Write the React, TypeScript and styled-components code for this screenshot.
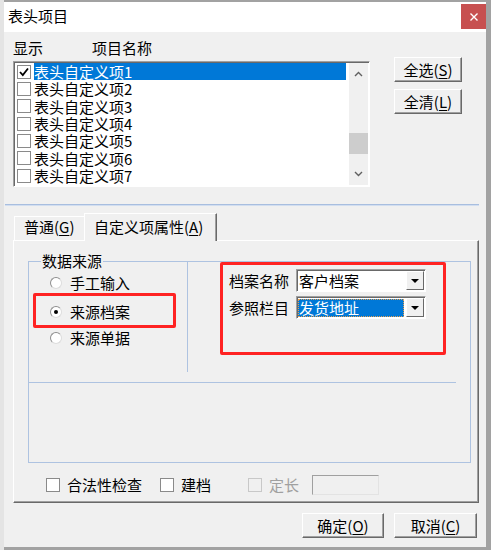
import React from "react";
import styled, { createGlobalStyle } from "styled-components";

const FONT = `"Noto Sans CJK SC", "Noto Sans", sans-serif`;

const GlobalStyle = createGlobalStyle`
  html, body { margin: 0; padding: 0; }
  body {
    width: 491px;
    height: 550px;
    overflow: hidden;
    background: linear-gradient(to right, #e4e4e4 0 4px, #a2a2a2 4px);
    font-family: ${FONT};
    font-size: 15px;
    color: #000;
  }
`;

const Screen = styled.div`
  padding: 2px 0 0 4px;
`;

const Window = styled.div`
  width: 482px;
  height: 545px;
  background: #f0f0f0;
  display: flex;
  flex-direction: column;
`;

const TitleBar = styled.div`
  height: 30px;
  flex-shrink: 0;
  background: #fff;
  display: flex;
  align-items: flex-start;
`;

const Title = styled.div`
  flex: 1;
  padding: 5px 0 0 4px;
  line-height: 18px;
`;

const CloseButton = styled.div`
  width: 25px;
  height: 25px;
  margin-top: 2px;
  background: #c75050;
  display: flex;
  align-items: center;
  justify-content: center;
`;

const Body = styled.div`
  padding: 8px 8px 0 9px;
  display: flex;
  flex-direction: column;
`;

const HeaderRow = styled.div`
  display: flex;
  height: 16px;
  line-height: 16px;
`;

const HeaderCell = styled.div<{ $w?: number }>`
  width: ${(p) => (p.$w ? `${p.$w}px` : "auto")};
`;

const ListRow = styled.div`
  display: flex;
  align-items: flex-start;
  margin-top: 5px;
`;

const ListBox = styled.div`
  width: 357px;
  height: 126px;
  box-sizing: border-box;
  border: 1px solid;
  border-color: #a0a0a0 #ffffff #ffffff #a0a0a0;
  box-shadow: inset 1px 1px 0 #696969;
  background: #fff;
  display: flex;
  padding: 1px 1px 0 1px;
`;

const Rows = styled.div`
  flex: 1;
  padding: 0 3px 0 0;
`;

const Row = styled.div`
  height: 17.33px;
  display: flex;
  align-items: center;
  padding-left: 2px;
`;

const Check = styled.div<{ $disabled?: boolean }>`
  width: 14px;
  height: 14px;
  flex-shrink: 0;
  box-sizing: border-box;
  border: 1px solid ${(p) => (p.$disabled ? "#c8c8c8" : "#8a8a8a")};
  background: ${(p) => (p.$disabled ? "#f0f0f0" : "#fff")};
  display: flex;
  align-items: center;
  justify-content: center;
`;

const RowLabel = styled.div<{ $selected?: boolean }>`
  flex: 1;
  margin-left: 3px;
  height: 17px;
  line-height: 17px;
  white-space: nowrap;
  background: ${(p) => (p.$selected ? "#0078d7" : "transparent")};
  color: ${(p) => (p.$selected ? "#fff" : "#000")};
`;

const ScrollBar = styled.div`
  width: 19px;
  display: flex;
  flex-direction: column;
  background: #f0f0f0;
  margin-bottom: 1px;
`;

const ScrollBtn = styled.div`
  height: 22px;
  display: flex;
  align-items: center;
  justify-content: center;
`;

const Track = styled.div`
  flex: 1;
  padding-top: 48px;
`;

const Thumb = styled.div`
  height: 21px;
  background: #cdcdcd;
`;

const SideButtons = styled.div`
  display: flex;
  flex-direction: column;
  gap: 7px;
  margin: -4px 0 0 24px;
`;

const ClassicButton = styled.div<{ $w: number }>`
  width: ${(p) => p.$w}px;
  height: 25px;
  box-sizing: border-box;
  border: 1px solid;
  border-color: #ffffff #696969 #696969 #ffffff;
  box-shadow: inset -1px -1px 0 #a0a0a0;
  background: #f0f0f0;
  display: flex;
  align-items: center;
  justify-content: center;
  line-height: 18px;
  u {
    text-decoration: underline;
    text-underline-offset: 2px;
  }
`;

const Separator = styled.div`
  margin: 17px 0 0 -8px;
  width: 474px;
  border-top: 1px solid #a8bedf;
  border-bottom: 1px solid #d2def0;
`;

const TabStrip = styled.div`
  margin-top: 7px;
  height: 27px;
  display: flex;
  align-items: flex-end;
  padding-left: 1px;
  position: relative;
  z-index: 1;
`;

const Tab = styled.div<{ $active?: boolean; $w: number }>`
  width: ${(p) => p.$w}px;
  height: ${(p) => (p.$active ? 28 : 24)}px;
  margin-bottom: ${(p) => (p.$active ? -1 : 0)}px;
  box-sizing: border-box;
  padding: 0 0 ${(p) => (p.$active ? 6 : 5)}px 9px;
  display: flex;
  align-items: flex-end;
  line-height: 16px;
  background: #f0f0f0;
  border-top: 1px solid #fff;
  border-left: 1px solid #fff;
  border-right: ${(p) => (p.$active ? "1px solid #696969" : "none")};
  box-shadow: ${(p) => (p.$active ? "inset -1px 0 0 #a0a0a0" : "none")};
  u {
    text-underline-offset: 2px;
  }
`;

const Panel = styled.div`
  width: 466px;
  height: 263px;
  box-sizing: border-box;
  border: 1px solid;
  border-color: #ffffff #696969 #696969 #ffffff;
  box-shadow: inset -1px -1px 0 #a0a0a0;
  padding: 20px 0 0 14px;
  display: flex;
  flex-direction: column;
`;

const Frame = styled.div`
  width: 443px;
  height: 202px;
  box-sizing: border-box;
  border: 1px solid #aec3e1;
  position: relative;
  display: flex;
  flex-direction: column;
`;

const FrameLabel = styled.div`
  position: absolute;
  top: -9px;
  left: 12px;
  padding: 0 1px;
  line-height: 16px;
  background: #f0f0f0;
`;

const TopRow = styled.div`
  height: 120px;
  display: flex;
  align-items: flex-start;
`;

const SourceCell = styled.div`
  width: 159px;
  height: 110px;
  border-right: 1px solid #aec3e1;
  padding-top: 11px;
  box-sizing: border-box;
  display: flex;
  flex-direction: column;
`;

const RadioRow = styled.div`
  height: 20px;
  display: flex;
  align-items: center;
  padding-left: 21px;
  line-height: 18px;
`;

const Highlight = styled.div`
  box-sizing: border-box;
  border: 3px solid #ff2323;
  border-radius: 2px;
`;

const RadioHighlight = styled(Highlight)`
  width: 143px;
  height: 35px;
  margin-left: 4px;
  padding: 3px 0 0 14px;
  display: flex;
  align-items: center;
  line-height: 18px;
`;

const Radio = styled.div<{ $on?: boolean }>`
  width: 12px;
  height: 12px;
  box-sizing: border-box;
  border-radius: 50%;
  border: 1px solid;
  border-color: #8e8e8e #dcdcdc #dcdcdc #8e8e8e;
  background: #fff;
  margin-right: 8px;
  display: flex;
  align-items: center;
  justify-content: center;
  &::after {
    content: "";
    display: ${(p) => (p.$on ? "block" : "none")};
    width: 4px;
    height: 4px;
    border-radius: 50%;
    background: #000;
  }
`;

const RefCell = styled.div`
  flex: 1;
  padding-left: 32px;
`;

const RefHighlight = styled(Highlight)`
  width: 226px;
  height: 93px;
  padding: 4px 0 0 6px;
  display: grid;
  grid-template-columns: 61px 130px;
  grid-auto-rows: 23px;
  column-gap: 6px;
  row-gap: 4px;
  align-content: start;
`;

const FieldLabel = styled.div`
  line-height: 23px;
  white-space: nowrap;
`;

const Combo = styled.div`
  height: 23px;
  box-sizing: border-box;
  border: 1px solid;
  border-color: #a0a0a0 #ffffff #ffffff #a0a0a0;
  box-shadow: inset 1px 1px 0 #696969;
  background: #fff;
  display: flex;
  padding: 1px 1px 0 1px;
`;

const ComboText = styled.div<{ $selected?: boolean }>`
  flex: 1;
  margin: 1px 2px 1px 0;
  padding-left: 1px;
  line-height: 18px;
  white-space: nowrap;
  background: ${(p) => (p.$selected ? "#0078d7" : "transparent")};
  color: ${(p) => (p.$selected ? "#fff" : "#000")};
  outline: ${(p) => (p.$selected ? "1px dotted #e8a050" : "none")};
  outline-offset: -1px;
`;

const DropButton = styled.div`
  width: 18px;
  height: 19px;
  box-sizing: border-box;
  border: 1px solid;
  border-color: #ffffff #696969 #696969 #ffffff;
  background: #f0f0f0;
  display: flex;
  align-items: center;
  justify-content: center;
  &::after {
    content: "";
    border-left: 4px solid transparent;
    border-right: 4px solid transparent;
    border-top: 4px solid #000;
  }
`;

const FrameDivider = styled.div`
  width: 427px;
  border-top: 1px solid #aec3e1;
`;

const CheckRow = styled.div`
  margin-top: 12px;
  height: 20px;
  display: flex;
  align-items: center;
  padding-left: 18px;
  line-height: 18px;
`;

const CheckItem = styled.div<{ $ml?: number; $disabled?: boolean }>`
  display: flex;
  align-items: center;
  gap: 7px;
  margin-left: ${(p) => p.$ml ?? 0}px;
  color: ${(p) => (p.$disabled ? "#a0a0a0" : "#000")};
`;

const DisabledInput = styled.div`
  width: 67px;
  height: 20px;
  margin-left: 13px;
  box-sizing: border-box;
  border: 1px solid;
  border-color: #a0a0a0 #e3e3e3 #e3e3e3 #a0a0a0;
  background: #f0f0f0;
`;

const FooterRow = styled.div`
  margin-top: 10px;
  display: flex;
  justify-content: flex-end;
  gap: 10px;
  padding-right: 1px;
`;

const ChevronUp = () => (
  <svg width="9" height="6" viewBox="0 0 9 6">
    <path d="M1 5 L4.5 1.5 L8 5" stroke="#606060" strokeWidth="1.4" fill="none" />
  </svg>
);

const ChevronDown = () => (
  <svg width="9" height="6" viewBox="0 0 9 6">
    <path d="M1 1 L4.5 4.5 L8 1" stroke="#606060" strokeWidth="1.4" fill="none" />
  </svg>
);

const Tick = () => (
  <svg width="12" height="12" viewBox="0 0 12 12">
    <path d="M2 6 L4.8 9 L10 2.5" stroke="#000" strokeWidth="1.8" fill="none" />
  </svg>
);

const items = [1, 2, 3, 4, 5, 6, 7];

export default function App() {
  return (
    <>
      <GlobalStyle />
      <Screen>
        <Window>
          <TitleBar>
            <Title>表头项目</Title>
            <CloseButton>
              <svg width="10" height="10" viewBox="0 0 10 10">
                <path d="M1.5 1.5 L8.5 8.5 M8.5 1.5 L1.5 8.5" stroke="#fff" strokeWidth="1.4" />
              </svg>
            </CloseButton>
          </TitleBar>
          <Body>
            <HeaderRow>
              <HeaderCell $w={79}>显示</HeaderCell>
              <HeaderCell>项目名称</HeaderCell>
            </HeaderRow>
            <ListRow>
              <ListBox>
                <Rows>
                  {items.map((n) => (
                    <Row key={n}>
                      <Check>{n === 1 && <Tick />}</Check>
                      <RowLabel $selected={n === 1}>表头自定义项{n}</RowLabel>
                    </Row>
                  ))}
                </Rows>
                <ScrollBar>
                  <ScrollBtn>
                    <ChevronUp />
                  </ScrollBtn>
                  <Track>
                    <Thumb />
                  </Track>
                  <ScrollBtn>
                    <ChevronDown />
                  </ScrollBtn>
                </ScrollBar>
              </ListBox>
              <SideButtons>
                <ClassicButton $w={68}>
                  全选(<u>S</u>)
                </ClassicButton>
                <ClassicButton $w={68}>
                  全清(<u>L</u>)
                </ClassicButton>
              </SideButtons>
            </ListRow>
            <Separator />
            <TabStrip>
              <Tab $w={70}>
                普通(<u>G</u>)
              </Tab>
              <Tab $w={133} $active>
                自定义项属性(<u>A</u>)
              </Tab>
            </TabStrip>
            <Panel>
              <Frame>
                <FrameLabel>数据来源</FrameLabel>
                <TopRow>
                  <SourceCell>
                    <RadioRow>
                      <Radio />
                      手工输入
                    </RadioRow>
                    <RadioHighlight>
                      <Radio $on />
                      来源档案
                    </RadioHighlight>
                    <RadioRow>
                      <Radio />
                      来源单据
                    </RadioRow>
                  </SourceCell>
                  <RefCell>
                    <RefHighlight>
                      <FieldLabel>档案名称</FieldLabel>
                      <Combo>
                        <ComboText>客户档案</ComboText>
                        <DropButton />
                      </Combo>
                      <FieldLabel>参照栏目</FieldLabel>
                      <Combo>
                        <ComboText $selected>发货地址</ComboText>
                        <DropButton />
                      </Combo>
                    </RefHighlight>
                  </RefCell>
                </TopRow>
                <FrameDivider />
              </Frame>
              <CheckRow>
                <CheckItem>
                  <Check />
                  合法性检查
                </CheckItem>
                <CheckItem $ml={18}>
                  <Check />
                  建档
                </CheckItem>
                <CheckItem $ml={37} $disabled>
                  <Check $disabled />
                  定长
                </CheckItem>
                <DisabledInput />
              </CheckRow>
            </Panel>
            <FooterRow>
              <ClassicButton $w={82}>
                确定(<u>O</u>)
              </ClassicButton>
              <ClassicButton $w={83}>
                取消(<u>C</u>)
              </ClassicButton>
            </FooterRow>
          </Body>
        </Window>
      </Screen>
    </>
  );
}
